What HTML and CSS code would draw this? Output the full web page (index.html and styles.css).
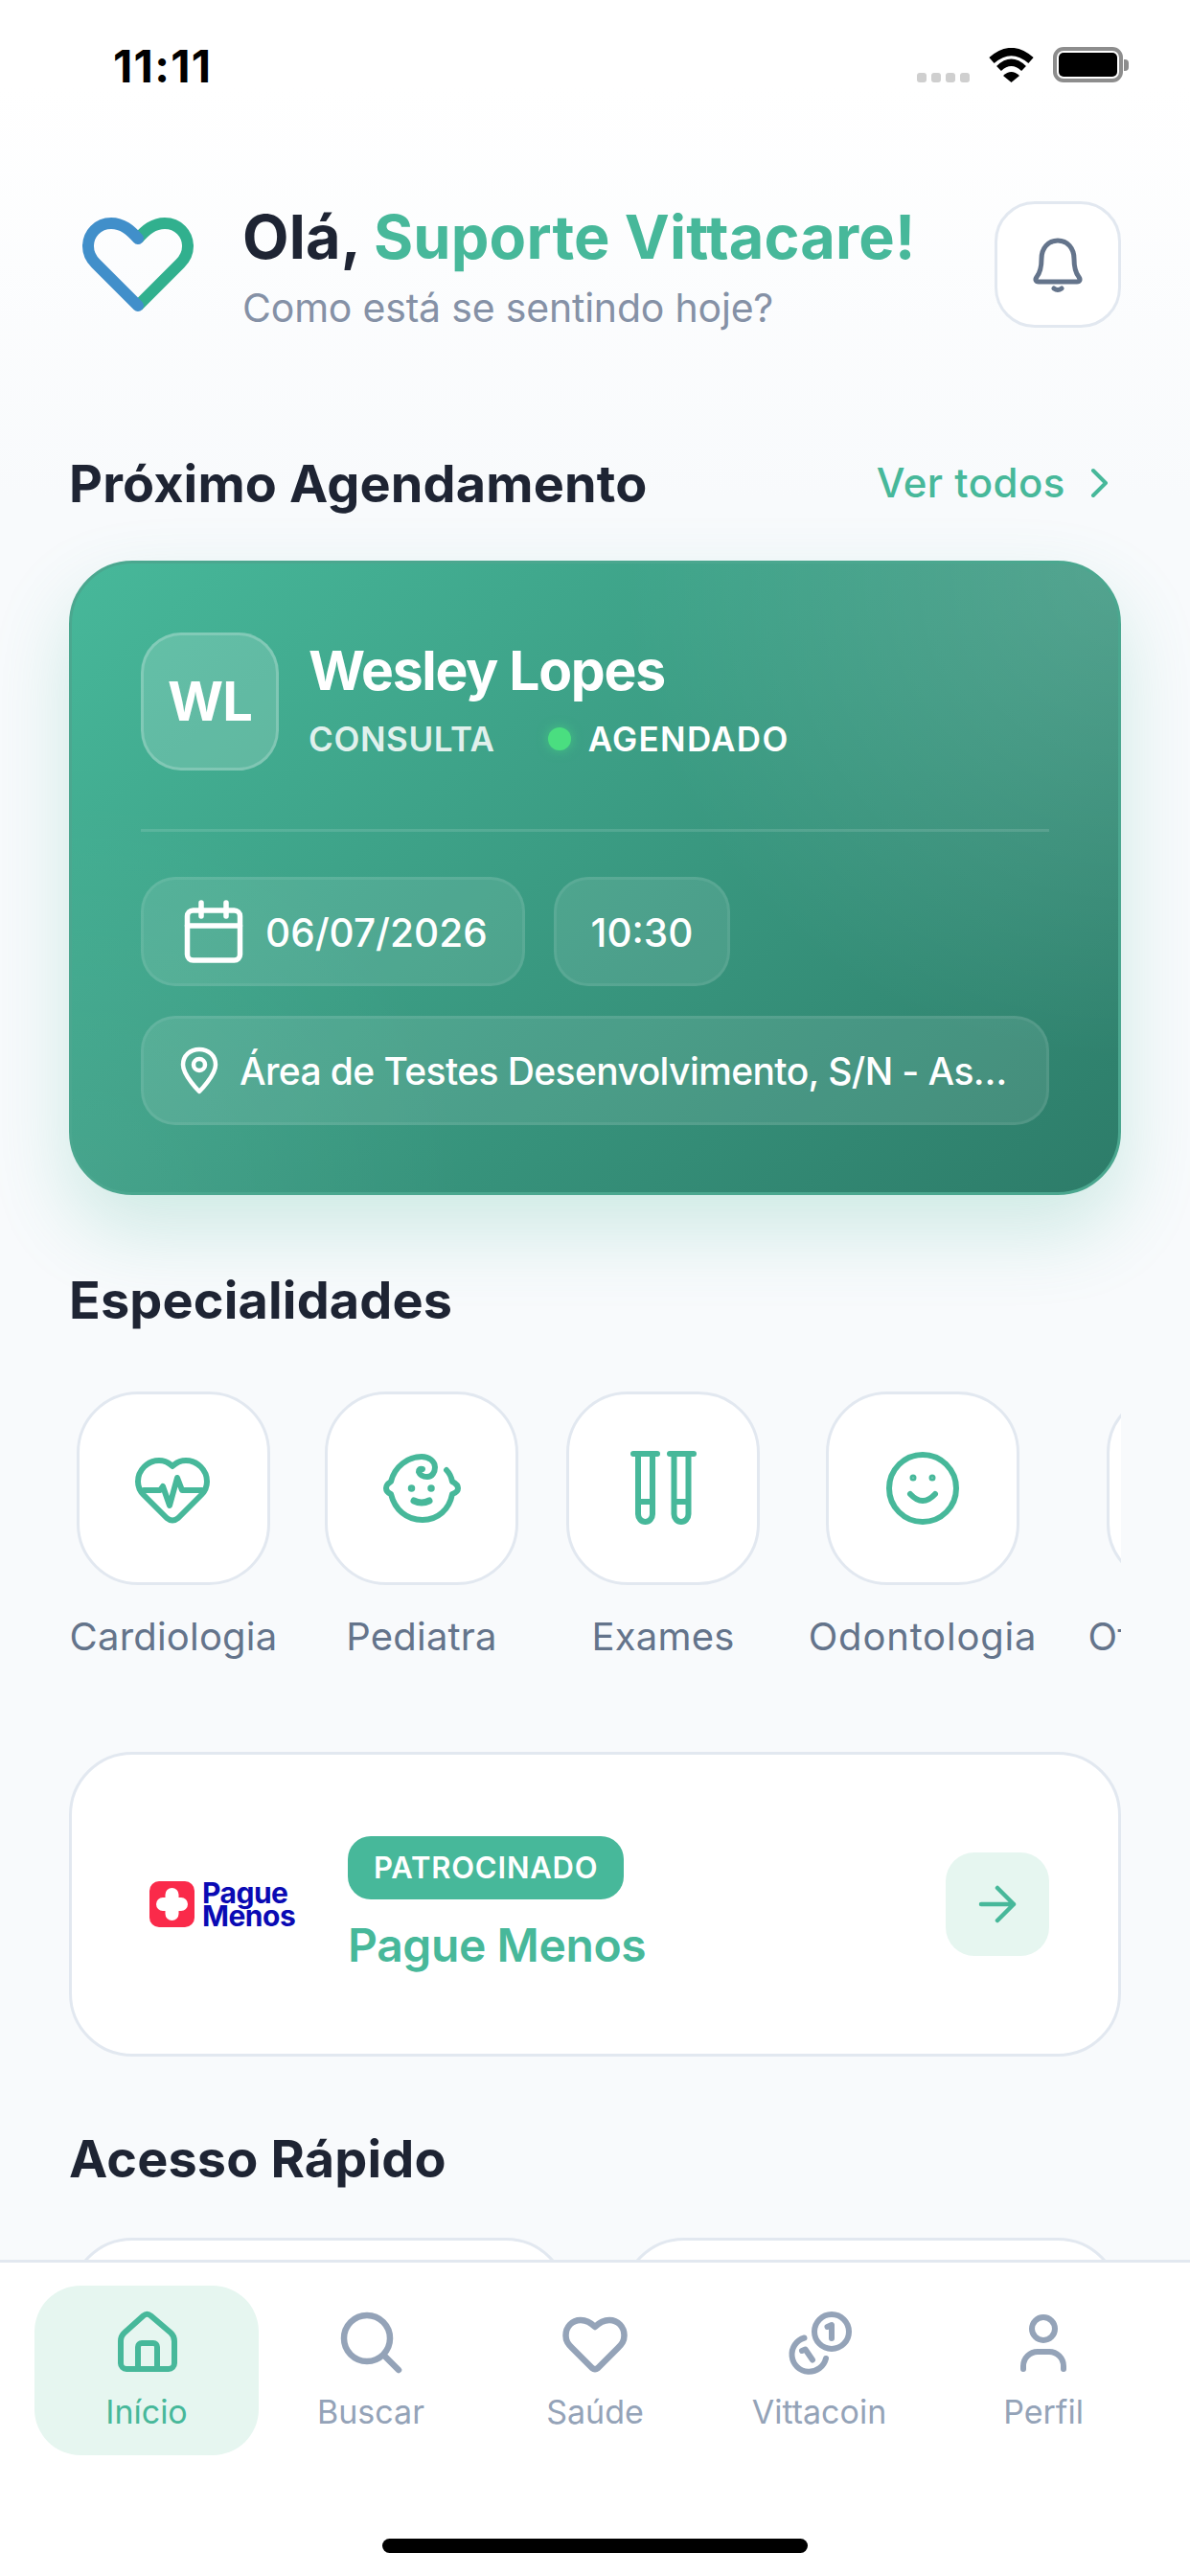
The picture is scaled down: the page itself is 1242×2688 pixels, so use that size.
FILE: index.html
```html
<!DOCTYPE html>
<html lang="pt-BR">
<head>
<meta charset="utf-8">
<title>Vittacare</title>
<link rel="stylesheet" href="styles.css">
</head>
<body>
<div class="screen">
  <div class="status">
    <span class="time">11:11</span>
    <div class="status-right">
      <div class="signal"><i></i><i></i><i></i><i></i></div>
      <svg class="wifi" width="47" height="36" viewBox="0 0 47 36"><path d="M3 13Q23.5-5 44 13" fill="none" stroke="#000" stroke-width="8"/><path d="M10.500 21.500Q23.500 9 36.500 21.500" fill="none" stroke="#000" stroke-width="7"/><path d="M15 29Q23.500 21 32 29L23.500 36Z" fill="#000"/></svg>
      <div class="battery"><div class="battery-fill"></div></div>
      <div class="battery-nub"></div>
    </div>
  </div>

  <main class="content">
    <header class="header">
      <svg class="logo" width="116" height="99" viewBox="0 0 116 99"><path d="M58 92L102 48C107 43 110 38 110 30C110 17 100 6 86 6C74 6 66 13 58 22" fill="none" stroke="#31b08e" stroke-width="12"/><path d="M58 22C50 13 42 6 30 6C16 6 6 17 6 30C6 38 9 43 14 48L58 92" fill="none" stroke="#418fca" stroke-width="12" stroke-linecap="round" stroke-linejoin="round"/></svg>
      <div class="greeting">
        <h1 class="greeting-title">Olá, <span class="accent">Suporte Vittacare!</span></h1>
        <p class="greeting-sub">Como está se sentindo hoje?</p>
      </div>
      <button class="bell">
        <svg width="56" height="60" viewBox="0 0 56 60" fill="none" stroke="#64748b" stroke-width="5" stroke-linecap="round" stroke-linejoin="round"><path d="M6 43C10 38 11 33 11 24C11 13 18 5 28 5C38 5 45 13 45 24C45 33 46 38 50 43C52 46 51 48 48 48H8C5 48 4 46 6 43Z"/><path d="M24 55Q28 58 32 55"/></svg>
      </button>
    </header>

    <div class="section-row">
      <h2 class="section-title">Próximo Agendamento</h2>
      <a class="see-all">Ver todos
        <svg width="24" height="32" viewBox="0 0 24 32" fill="none" stroke="#47b89a" stroke-width="4" stroke-linecap="round" stroke-linejoin="round"><path d="M5 3L18 16L5 29"/></svg>
      </a>
    </div>

    <section class="appt">
      <div class="appt-top">
        <div class="avatar">WL</div>
        <div class="appt-info">
          <div class="appt-name">Wesley Lopes</div>
          <div class="appt-meta">
            <span class="appt-type">CONSULTA</span>
            <span class="dot"></span>
            <span class="appt-state">AGENDADO</span>
          </div>
        </div>
      </div>
      <div class="divider"></div>
      <div class="chips">
        <div class="chip chip-date">
          <svg width="62" height="66" viewBox="0 0 62 66" fill="none" stroke="#fff" stroke-width="5.500" stroke-linecap="round" stroke-linejoin="round"><rect x="3.500" y="11" width="55" height="52" rx="6"/><path d="M3.500 27H58.500M18 3V17M44 3V17"/></svg>
          <span>06/07/2026</span>
        </div>
        <div class="chip chip-time"><span>10:30</span></div>
      </div>
      <div class="chip chip-loc">
        <svg width="40" height="50" viewBox="0 0 40 50" fill="none" stroke="#fff" stroke-width="4.500" stroke-linecap="round" stroke-linejoin="round"><path d="M20 47C20 47 37 30 37 19C37 9.500 29.500 3 20 3C10.500 3 3 9.500 3 19C3 30 20 47 20 47Z"/><circle cx="20" cy="19" r="6"/></svg>
        <span>Área de Testes Desenvolvimento, S/N - As…</span>
      </div>
    </section>

    <h2 class="section-title spec-title">Especialidades</h2>
    <div class="spec-list">
      <div class="spec">
        <div class="tile">
          <svg width="96" height="96" viewBox="0 0 96 96" fill="none" stroke="#47b89a" stroke-width="6" stroke-linecap="round" stroke-linejoin="round"><path d="M47 25C43 21 38 19 33 19C21 19 11 29 11 41C11 47 14 52 17 55L41 79Q47 84 53 79L77 55C80 52 83 47 83 41C83 29 73 19 61 19C56 19 51 21 47 25Z"/><path d="M17 50H34L37 46L44 66L52 37L57 50H78"/></svg>
        </div>
        <span class="spec-label">Cardiologia</span>
      </div>
      <div class="spec">
        <div class="tile">
          <svg width="96" height="96" viewBox="0 0 96 96" fill="none" stroke="#47b89a" stroke-width="6" stroke-linecap="round" stroke-linejoin="round"><path d="M49 28Q45 27 45 31Q47 36 54 36C59 36 62 31 62 26C62 20 56 15 48 15C34 15 20 25 16 41Q11 44 11 48Q11 52 16 54C20 70 32 81 49 81C65 81 77 70 80 54Q86 52 86 48Q86 44 80 41C79 36 77 32 74 29"/><circle cx="37.500" cy="48" r="2" stroke-width="3.500"/><circle cx="58" cy="48" r="2" stroke-width="3.500"/><path d="M40 61Q48 65 56 61" stroke-width="7"/></svg>
        </div>
        <span class="spec-label">Pediatra</span>
      </div>
      <div class="spec">
        <div class="tile">
          <svg width="96" height="96" viewBox="0 0 96 96" fill="none" stroke="#47b89a" stroke-width="6" stroke-linecap="round" stroke-linejoin="round"><path d="M17 12H42M22 12V75A7.500 8 0 0 0 37 75V12M22 62H37"/><path d="M55 12H80M59.500 12V75A7.500 8 0 0 0 74.500 75V12M59.500 62H74.500"/></svg>
        </div>
        <span class="spec-label">Exames</span>
      </div>
      <div class="spec">
        <div class="tile">
          <svg width="96" height="96" viewBox="0 0 96 96" fill="none" stroke="#47b89a" stroke-width="6" stroke-linecap="round" stroke-linejoin="round"><circle cx="48" cy="48" r="35"/><circle cx="38" cy="37" r="1.500" stroke-width="4"/><circle cx="58" cy="37" r="1.500" stroke-width="4"/><path d="M35 54Q48 68 61 54"/></svg>
        </div>
        <span class="spec-label spec-label-wide">Odontologia</span>
      </div>
      <div class="spec">
        <div class="tile"></div>
        <span class="spec-label">Oftalmologia</span>
      </div>
    </div>

    <section class="promo">
      <div class="promo-logo">
        <svg class="promo-mark" width="47" height="48" viewBox="0 0 47 48"><rect width="47" height="48" rx="10" fill="#fa2a4a"/><path d="M23.500 14V34M14 24H33" fill="none" stroke="#fff" stroke-width="14" stroke-linecap="round"/></svg>
        <div class="promo-brand"><span>Pague</span><span>Menos</span></div>
      </div>
      <div class="promo-info">
        <span class="promo-badge">PATROCINADO</span>
        <span class="promo-name">Pague Menos</span>
      </div>
      <div class="promo-go">
        <svg width="40" height="40" viewBox="0 0 40 40" fill="none" stroke="#47b89a" stroke-width="4.500" stroke-linecap="round" stroke-linejoin="round"><path d="M3 20H37M20 3L37 20L20 37"/></svg>
      </div>
    </section>

    <h2 class="section-title quick-title">Acesso Rápido</h2>
    <div class="quick">
      <div class="quick-card"></div>
      <div class="quick-card"></div>
    </div>
  </main>

  <nav class="tabbar">
    <div class="tabs">
      <div class="tab tab-active">
        <svg width="72" height="72" viewBox="0 0 72 72" fill="none" stroke="#47b89a" stroke-width="6" stroke-linecap="round" stroke-linejoin="round"><path d="M32.500 9.500Q36.500 6 40.500 9.500L61 27Q65 30.500 65 36V59A6 6 0 0 1 59 65H15A6 6 0 0 1 9 59V36Q9 30.500 13 27Z"/><path d="M27 65V42A4 4 0 0 1 31 38H43A4 4 0 0 1 47 42V65"/></svg>
        <span>Início</span>
      </div>
      <div class="tab">
        <svg width="72" height="72" viewBox="0 0 72 72" fill="none" stroke="#94a3b8" stroke-width="6.500" stroke-linecap="round" stroke-linejoin="round"><circle cx="32" cy="33" r="24"/><path d="M50 51L65 66"/></svg>
        <span>Buscar</span>
      </div>
      <div class="tab">
        <svg width="72" height="72" viewBox="0 0 72 72" fill="none" stroke="#94a3b8" stroke-width="6.500" stroke-linecap="round" stroke-linejoin="round"><path d="M36 21C32 17 28 14 21 14C12 14 5.500 21 5.500 30C5.500 36 8 39 12 43L33 64Q36 66.500 39 64L60 43C64 39 66.500 36 66.500 30C66.500 21 60 14 51 14C44 14 40 17 36 21Z"/></svg>
        <span>Saúde</span>
      </div>
      <div class="tab">
        <svg width="72" height="72" viewBox="0 0 72 72" fill="none" stroke="#94a3b8" stroke-width="6" stroke-linecap="round" stroke-linejoin="round"><circle cx="49" cy="26" r="18"/><path d="M44.500 21L49 19V33"/><path d="M20.500 32.500A18 18 0 1 0 43 54"/><path d="M18 46L21.500 44.500L29 55.500"/></svg>
        <span>Vittacoin</span>
      </div>
      <div class="tab">
        <svg width="72" height="72" viewBox="0 0 72 72" fill="none" stroke="#94a3b8" stroke-width="6" stroke-linecap="round" stroke-linejoin="round"><circle cx="36" cy="23" r="12"/><path d="M15 65V62A15 15 0 0 1 30 47H42A15 15 0 0 1 57 62V65"/></svg>
        <span>Perfil</span>
      </div>
    </div>
    <div class="home-bar"></div>
  </nav>
</div>
</body>
</html>
```

FILE: styles.css
```css
* { box-sizing: border-box; margin: 0; padding: 0; }
html, body { width: 1242px; height: 2688px; overflow: hidden; }
body { font-family: Inter, "Noto Sans", sans-serif; color: #1e293b; background: #f8fafc; }

.screen {
  position: relative;
  width: 1242px;
  height: 2688px;
  overflow: hidden;
  background: linear-gradient(180deg, #ffffff 0, #ffffff 90px, #f8fafc 520px);
}

/* status bar */
.status {
  display: flex;
  justify-content: space-between;
  align-items: flex-start;
  height: 210px;
  padding: 44px 64px 0 118px;
}
.time { font-size: 47px; line-height: 46px; font-weight: 700; color: #000; letter-spacing: 1.300px; margin-top: 2px; }
.status-right { display: flex; align-items: flex-end; margin-top: 5px; }
.signal { display: flex; gap: 5px; margin-right: 20px; }
.signal i { display: block; width: 10px; height: 10px; border-radius: 3px; background: #cfcfcf; }
.wifi { margin-right: 20px; display: block; }
.battery { width: 73px; height: 37px; padding: 2px; border: 4px solid #8d8d8d; border-radius: 11px; }
.battery-fill { height: 100%; background: #000; border-radius: 5px; }
.battery-nub { width: 5px; height: 12px; margin: 0 0 12px 1px; background: #8d8d8d; border-radius: 0 4px 4px 0; }

/* content */
.content { padding: 0 72px; }
.header { display: flex; align-items: center; height: 132px; }
.logo { display: block; margin-left: 14px; flex: none; }
.greeting { margin-left: 51px; margin-top: 5px; flex: 1; }
.greeting-title { font-size: 63px; line-height: 72px; font-weight: 700; color: #1e2433; letter-spacing: .150px; white-space: nowrap; }
.accent { color: #47b89a; }
.greeting-sub { margin-top: 13px; font-size: 41px; line-height: 50px; color: #8591a6; letter-spacing: -.200px; white-space: nowrap; }
.bell {
  display: flex;
  align-items: center;
  justify-content: center;
  flex: none;
  width: 132px;
  height: 132px;
  background: #fff;
  border: 3px solid #e2e8f0;
  border-radius: 42px;
}

.section-row { display: flex; justify-content: space-between; align-items: center; margin-top: 130px; height: 66px; }
.section-title { font-size: 54px; line-height: 66px; font-weight: 700; color: #1e2433; letter-spacing: .150px; white-space: nowrap; }
.see-all { display: flex; align-items: center; gap: 24px; padding-right: 10px; margin-top: -3px; font-size: 42px; font-weight: 500; color: #47b89a; letter-spacing: .5px; }
.see-all svg { display: block; }

/* appointment */
.appt {
  margin-top: 47px;
  height: 662px;
  padding: 72px 72px 0;
  border: 3px solid #4ba78f;
  border-radius: 66px;
  background:
    radial-gradient(circle at 100% 0, rgba(255,255,255,.14), rgba(255,255,255,0) 520px),
    radial-gradient(circle at 0 100%, rgba(255,255,255,.05), rgba(255,255,255,0) 420px),
    linear-gradient(140deg, #47b89a 0%, #2d7c69 100%);
  box-shadow: 0 36px 80px rgba(71,184,154,.24);
}
.appt-top { display: flex; height: 144px; }
.avatar {
  display: flex;
  align-items: center;
  justify-content: center;
  flex: none;
  width: 144px;
  height: 144px;
  border: 3px solid rgba(255,255,255,.2);
  border-radius: 42px;
  background: rgba(255,255,255,.17);
  color: #fff;
  font-size: 56px;
  font-weight: 700;
  letter-spacing: -1px;
}
.appt-info { margin-left: 31px; }
.appt-name { margin-top: 4px; font-size: 57px; line-height: 72px; font-weight: 700; color: #fff; letter-spacing: -1.300px; white-space: nowrap; }
.appt-meta { display: flex; align-items: center; margin-top: 14px; font-size: 35px; line-height: 42px; font-weight: 600; letter-spacing: .6px; }
.appt-type { color: rgba(255,255,255,.85); }
.dot { width: 24px; height: 24px; margin-left: 55px; border-radius: 50%; background: #4ade80; box-shadow: 0 0 12px rgba(74,222,128,.6); }
.appt-state { margin-left: 18px; color: #fff; letter-spacing: 1.300px; }
.divider { height: 3px; margin-top: 61px; background: rgba(255,255,255,.13); }
.chips { display: flex; gap: 30px; margin-top: 47px; }
.chip {
  display: flex;
  align-items: center;
  height: 114px;
  border: 3px solid rgba(255,255,255,.07);
  border-radius: 36px;
  background: rgba(255,255,255,.1);
  color: #fff;
  white-space: nowrap;
}
.chip svg { display: block; flex: none; }
.chip span { padding-top: 3px; }
.chip-date { gap: 23px; width: 401px; padding-left: 42px; font-size: 40.5px; font-weight: 500; }
.chip-time { width: 184px; justify-content: center; font-size: 40.5px; font-weight: 500; }
.chip-loc { gap: 22px; margin-top: 31px; padding-left: 38px; font-size: 39px; font-weight: 500; letter-spacing: -.600px; }
.chip-loc span { padding-top: 0; }

/* specialties */
.spec-title { margin-top: 77px; }
.spec-list {
  display: grid;
  grid-template-columns: 216px 200px 202px 238px 246px;
  column-gap: 51px;
  margin-top: 62px;
  padding-left: 1px;
  overflow: hidden;
}
.spec { display: flex; flex-direction: column; align-items: center; }
.tile {
  display: flex;
  align-items: center;
  justify-content: center;
  flex: none;
  width: 202px;
  height: 202px;
  background: #fff;
  border: 3px solid #e2e8f0;
  border-radius: 64px;
}
.tile svg { display: block; }
.spec-label { margin-top: 30px; font-size: 40px; line-height: 48px; color: #64748b; white-space: nowrap; letter-spacing: .200px; }
.spec-label-wide { letter-spacing: .800px; }

/* sponsored */
.promo {
  display: flex;
  align-items: center;
  margin-top: 96px;
  height: 318px;
  padding: 0 72px 0 81px;
  background: #fff;
  border: 3px solid #e2e8f0;
  border-radius: 66px;
}
.promo-logo { display: flex; align-items: center; gap: 8px; width: 207px; flex: none; }
.promo-mark { display: block; flex: none; }
.promo-brand { display: flex; flex-direction: column; font-size: 30px; line-height: 24px; font-weight: 700; color: #0a0ab4; letter-spacing: -.500px; }
.promo-info { display: flex; flex-direction: column; align-items: flex-start; flex: 1; padding-top: 3px; }
.promo-badge { display: flex; align-items: center; height: 66px; padding: 0 27px; border-radius: 24px; background: #47b89a; color: #fff; font-size: 31px; font-weight: 600; letter-spacing: .800px; }
.promo-name { margin-top: 16px; font-size: 48px; line-height: 64px; font-weight: 600; color: #47b89a; letter-spacing: -.400px; }
.promo-go { display: flex; align-items: center; justify-content: center; flex: none; width: 108px; height: 108px; border-radius: 30px; background: #e6f6f0; }
.promo-go svg { display: block; }

/* quick access */
.quick-title { margin-top: 74px; }
.quick { display: flex; gap: 54px; margin-top: 49px; }
.quick-card { flex: 1; height: 300px; background: #fff; border: 3px solid #e2e8f0; border-radius: 66px; }

/* tab bar */
.tabbar {
  position: absolute;
  left: 0;
  right: 0;
  bottom: 0;
  height: 330px;
  background: #fff;
  border-top: 3px solid #e2e8f0;
}
.tabs { display: flex; padding: 24px 36px 0; }
.tab {
  display: flex;
  flex-direction: column;
  align-items: center;
  width: 234px;
  height: 177px;
  padding-top: 22px;
  border-radius: 48px;
  font-size: 34px;
  line-height: 40px;
  color: #94a3b8;
}
.tab svg { display: block; }
.tab span { margin-top: 18px; }
.tab-active { background: #e6f6f0; color: #47b89a; }
.home-bar { width: 444px; height: 15px; margin: 87px auto 0; background: #000; border-radius: 8px; }
```
